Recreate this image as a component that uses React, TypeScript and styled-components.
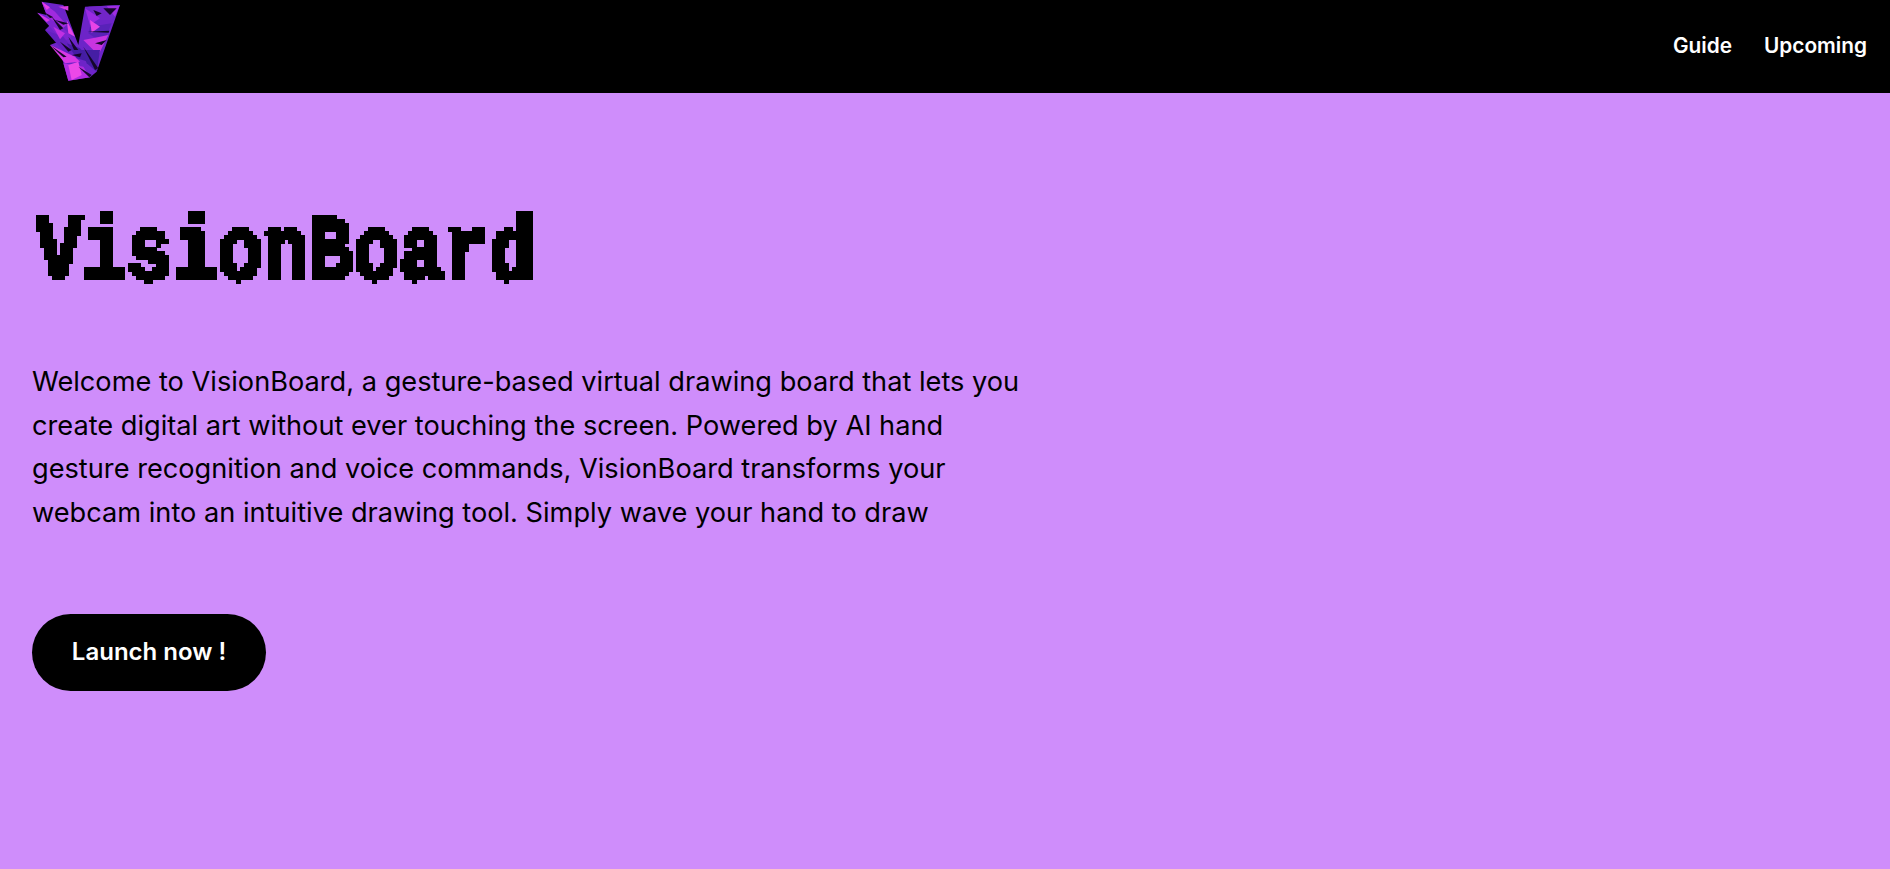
import React from 'react';
import styled, { createGlobalStyle } from 'styled-components';

const GlobalStyle = createGlobalStyle`
  html, body {
    margin: 0;
    padding: 0;
    background: #cf8dfb;
    font-family: Inter, 'Noto Sans', sans-serif;
  }
`;

// shards of the logo, coordinates are 3x the on-screen size
const base = '125,5 190,15 235,135 255,20 360,15 290,215 270,232 205,242 185,170 150,135 175,125 135,90 150,75 112,38 140,45';
const shards: [string, string][] = [
  ['125,5 165,35 200,75 175,95 140,45', '#a02ade'],
  ['112,38 175,70 215,110 190,125', '#7e24d0'],
  ['135,90 190,110 230,160 200,165', '#6420c0'],
  ['150,135 225,170 240,185 195,190', '#d838e4'],
  ['190,190 250,200 270,232 205,242', '#b02ce0'],
  ['200,130 240,145 280,190 230,175', '#451ca4'],
  ['265,20 360,15 335,60 290,60', '#7226c8'],
  ['255,25 300,55 270,75', '#9a2ae2'],
  ['270,80 335,70 310,130 265,100', '#5822b8'],
  ['250,120 300,110 325,105 295,165', '#c834e0'],
  ['245,150 300,150 290,215 260,190', '#451ea4'],
  ['175,20 205,18 205,32', '#d83ce0'],
  ['200,60 225,110 205,100', '#e844e6'],
  ['125,5 150,22 140,30', '#e83ee6'],
  ['112,38 150,60 140,66', '#d636e6'],
  ['205,195 235,185 245,225 215,240', '#ec48e8'],
  ['320,18 358,18 345,50', '#a02ee0'],
  ['270,60 300,80 275,98', '#e844e6'],
  ['160,80 195,100 180,118', '#c030e2'],
];
const cuts: string[] = [
  '155,50 190,85 180,90',
  '165,60 205,70 190,74',
  '180,125 215,150 205,155',
  '150,135 200,170 190,172',
  '205,110 235,150 222,150',
  '250,140 295,205 285,210',
  '262,95 328,92 326,98',
  '310,25 350,25 330,45',
  '235,200 275,225 268,232',
  '285,130 320,120 305,135',
  '280,30 305,40 290,48',
  '130,35 160,52 150,54',
  '215,165 245,160 240,172',
];

const Logo = () => (
  <LogoSvg viewBox="0 0 480 279" aria-label="VisionBoard logo">
    <polygon points={base} fill="#6d24c8" />
    {shards.map(([points, fill]) => (
      <polygon key={points} points={points} fill={fill} />
    ))}
    {cuts.map((points) => (
      <polygon key={points} points={points} fill="#14062a" />
    ))}
  </LogoSvg>
);

export default function App() {
  return (
    <Page>
      <GlobalStyle />
      <HiddenDefs aria-hidden="true">
        <filter id="blocky" x="-2%" y="-5%" width="104%" height="110%">
          <feFlood x="2" y="2" width="1" height="1" />
          <feComposite width="4" height="4" />
          <feTile result="grid" />
          <feComposite in="SourceGraphic" in2="grid" operator="in" />
          <feMorphology operator="dilate" radius="2" />
          <feComponentTransfer>
            <feFuncA type="discrete" tableValues="0 1 1" />
          </feComponentTransfer>
        </filter>
      </HiddenDefs>
      <Header>
        <Logo />
        <Nav>
          <NavLink>Guide</NavLink>
          <NavLink>Upcoming</NavLink>
        </Nav>
      </Header>
      <Hero>
        <Title>
          <TitleText>VisionBoard</TitleText>
        </Title>
        <Intro>
          Welcome to VisionBoard, a gesture-based virtual drawing board that lets you
          create digital art without ever touching the screen. Powered by AI hand
          gesture recognition and voice commands, VisionBoard transforms your
          webcam into an intuitive drawing tool. Simply wave your hand to draw
        </Intro>
        <LaunchButton>Launch now !</LaunchButton>
      </Hero>
    </Page>
  );
}

const Page = styled.div`
  min-height: 869px;
  background: #cf8dfb;
  color: #000;
`;

const HiddenDefs = styled.svg`
  position: absolute;
  width: 0;
  height: 0;
`;

const Header = styled.header`
  height: 93px;
  background: #000;
  display: flex;
  align-items: flex-start;
  justify-content: space-between;
  padding-right: 23px;
`;

const LogoSvg = styled.svg`
  width: 160px;
  height: 93px;
  display: block;
`;

const Nav = styled.nav`
  display: flex;
  gap: 32px;
  padding-top: 34px;
`;

const NavLink = styled.a`
  color: #fff;
  font-size: 20.8px;
  font-weight: 600;
  line-height: 24px;
`;

const Hero = styled.main`
  padding: 118px 32px 0;
`;

const Title = styled.h1`
  margin: 0;
  font-family: 'Liberation Mono', 'DejaVu Sans Mono', monospace;
  font-size: 90px;
  font-weight: 700;
  line-height: 88px;
  filter: url(#blocky);
`;

const TitleText = styled.span`
  display: inline-block;
  transform: translateX(4px) scaleX(0.84);
  transform-origin: left center;
  -webkit-text-stroke: 3px #000;
`;

const Intro = styled.p`
  margin: 61px 0 0;
  width: 1010px;
  font-size: 27.2px;
  line-height: 43.5px;
`;

const LaunchButton = styled.button`
  display: block;
  margin-top: 80px;
  width: 234px;
  height: 77px;
  padding: 0 0 2px;
  border: 0;
  border-radius: 39px;
  background: #000;
  color: #fff;
  font-family: Inter, sans-serif;
  font-size: 24px;
  font-weight: 600;
`;
